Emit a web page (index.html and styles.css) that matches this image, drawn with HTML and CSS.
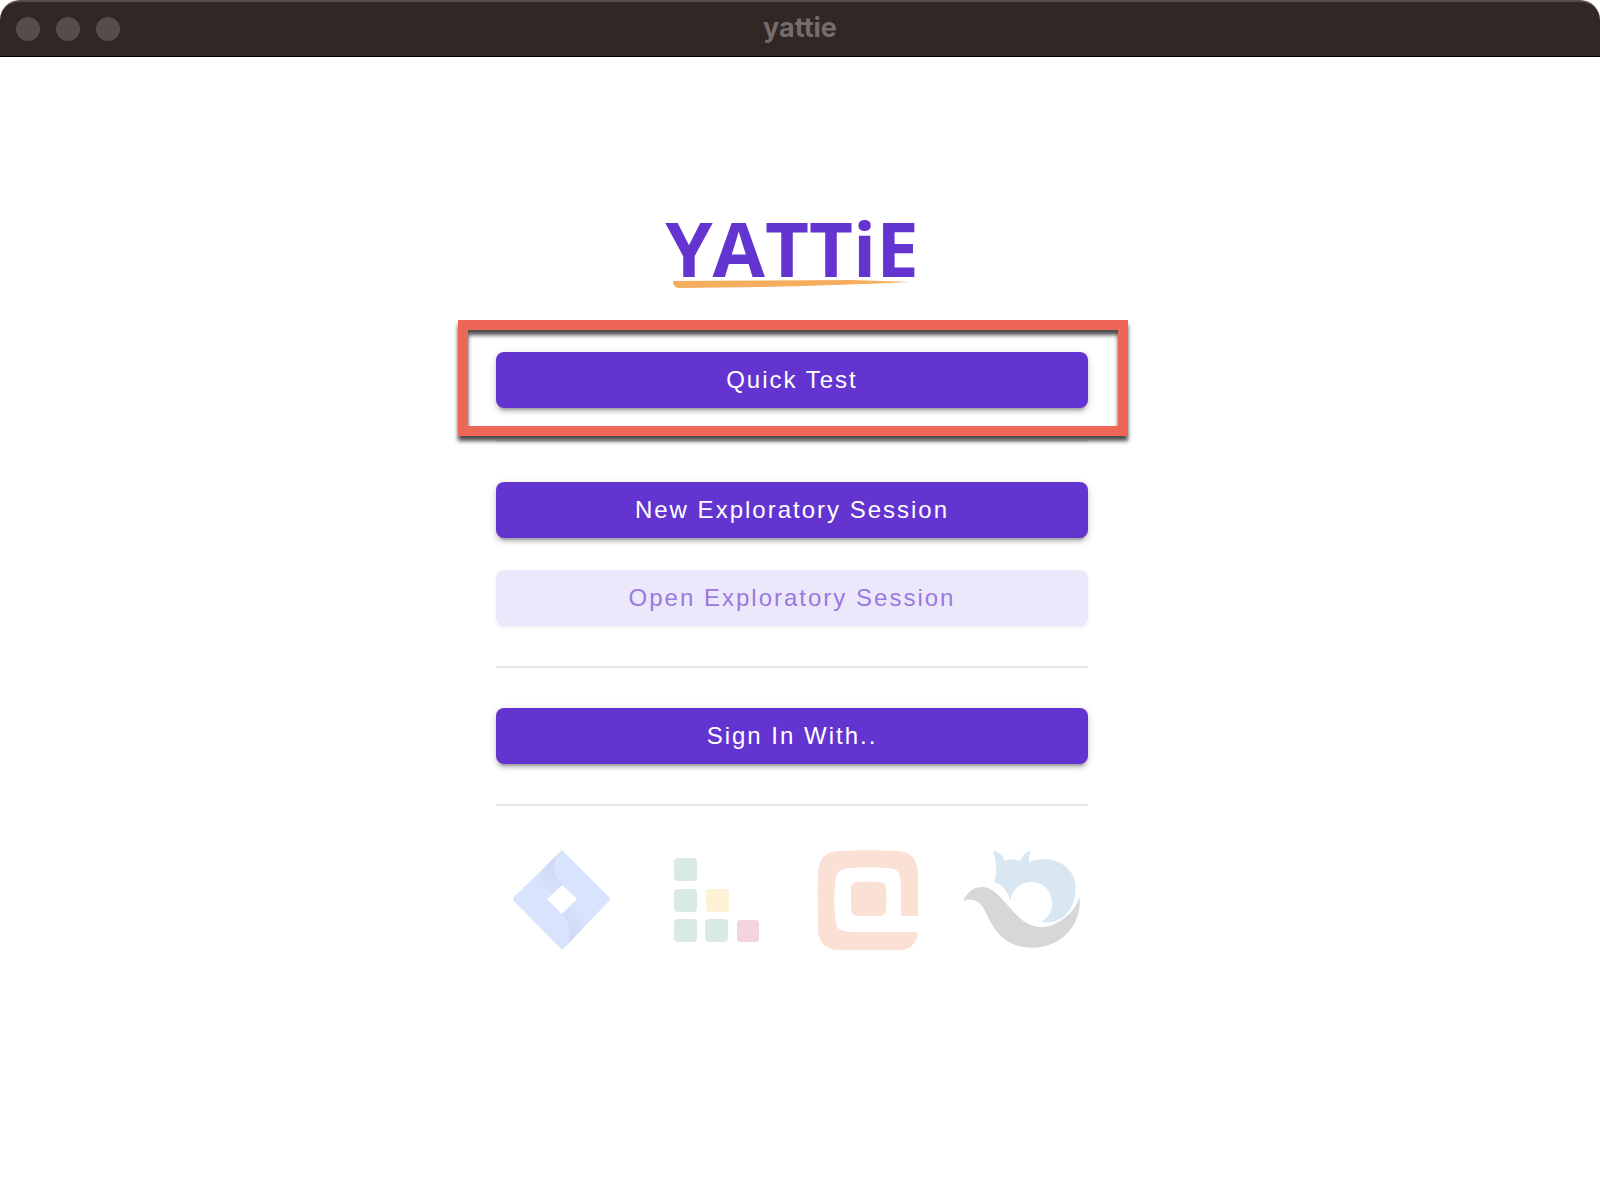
FILE: index.html
```html
<!DOCTYPE html>
<html lang="en">
<head>
<meta charset="utf-8">
<meta name="viewport" content="width=device-width, initial-scale=1">
<title>yattie</title>
<link rel="stylesheet" href="styles.css">
</head>
<body>
<header class="titlebar">
  <div class="lights"><span class="light"></span><span class="light"></span><span class="light"></span></div>
  <div class="title">yattie</div>
</header>
<main class="main">
  <div class="column">
    <svg class="logo" viewBox="0 0 240 72" role="img" aria-label="YATTiE">
      <text class="logo-text" x="120" y="59" text-anchor="middle">YATTiE</text>
      <path fill="#f4ae5e" d="M1 63 L180 62 L238 64 Q180 67 90 69 L10 70 Q1 71 1 63Z"/>
    </svg>
    <div class="quick">
      <button class="btn" type="button">Quick Test</button>
      <div class="highlight"></div>
    </div>
    <hr class="rule">
    <div class="group">
      <button class="btn" type="button">New Exploratory Session</button>
      <button class="btn" type="button" disabled>Open Exploratory Session</button>
    </div>
    <hr class="rule">
    <div class="group">
      <button class="btn" type="button">Sign In With..</button>
    </div>
    <hr class="rule">
    <div class="services">
      <svg viewBox="0 0 148 112" aria-hidden="true">
        <defs>
          <linearGradient id="fold-a" gradientUnits="userSpaceOnUse" x1="60" y1="24" x2="42" y2="42"><stop offset="0" stop-color="#d0d8f3"/><stop offset="1" stop-color="#d8e4fd"/></linearGradient>
          <linearGradient id="fold-b" gradientUnits="userSpaceOnUse" x1="72" y1="87" x2="90" y2="69"><stop offset="0" stop-color="#d0d8f3"/><stop offset="1" stop-color="#d8e4fd"/></linearGradient>
        </defs>
        <path fill="#d8e4fd" fill-rule="evenodd" d="M66 6 L113 53 Q115 55 113 57 L66 106 L18 57 Q16 55 18 53Z M66 41 L51 55 L66 70 L81 55Z"/>
        <path fill="url(#fold-a)" d="M62 10 Q53 26 66 41 L54 52 L29 43Z"/>
        <path fill="url(#fold-b)" d="M70 102 Q79 86 66 70 L78 58 L103 67Z"/>
      </svg>
      <svg viewBox="0 0 148 112" aria-hidden="true">
        <g fill="#d9e9e3">
          <rect x="30" y="14" width="23" height="23" rx="4"/>
          <rect x="30" y="45" width="23" height="23" rx="4"/>
          <rect x="30" y="75" width="23" height="23" rx="4"/>
          <rect x="61" y="75" width="23" height="23" rx="4"/>
        </g>
        <rect x="62" y="45" width="23" height="23" rx="4" fill="#fdf1d6"/>
        <rect x="93" y="76" width="22" height="22" rx="4" fill="#f5d4e2"/>
      </svg>
      <svg viewBox="0 0 148 112" aria-hidden="true">
        <path fill="#fbe0d5" d="M126 72 H109 V42 C109 28 106 24 92 24 C81 23 70 23 60 24 C47 25 44 28 43 41 C42 51 42 61 43 71 C44 85 46 87 59 88 H120 Q126 88 126 90 Q122 106 108 106 H48 Q26 106 26 84 C26 66 25 47 26 29 Q27 7 48 7 C67 6 86 6 104 7 Q125 7 126 29Z"/>
        <path fill="#fbe0d5" d="M66 38 Q76 37 87 38 Q94 38 94 45 Q95 55 94 65 Q94 72 87 72 H66 Q59 72 59 65 V45 Q59 38 66 38Z"/>
      </svg>
      <svg viewBox="0 0 148 112" aria-hidden="true">
        <g transform="translate(10 -9) scale(.3333)">
          <path fill="#d8e7f2" d="M129 47C150 52 160 62 163 78C178 72 198 72 212 79C216 62 226 50 244 47C238 58 236 68 236 82C290 58 350 80 370 125C392 180 360 250 310 260C298 263 285 263 274 260C300 245 310 220 305 195C300 160 275 141 243 141C210 142 185 165 181 197C172 165 155 148 133 142C142 115 140 85 129 47Z"/>
          <path fill="#d7d7d7" d="M39 198C55 165 80 153 105 157C140 163 165 205 195 235C240 285 290 285 330 258C365 235 380 215 388 185C398 250 350 338 245 338C180 338 145 305 118 255C100 215 85 180 39 198Z"/>
        </g>
      </svg>
    </div>
  </div>
</main>
</body>
</html>
```
FILE: styles.css
```css
* { box-sizing: border-box; }

body {
  margin: 0;
  background: #fff;
  font-family: "Liberation Sans", Arial, sans-serif;
}

.titlebar {
  display: grid;
  grid-template-columns: 1fr auto 1fr;
  align-items: center;
  height: 57px;
  padding: 0 16px;
  background: #312725;
  border-top: 2px solid #564b49;
  border-bottom: 1px solid #000;
  border-radius: 20px 20px 0 0;
}

.lights { display: flex; gap: 16px; }

.light {
  width: 24px;
  height: 24px;
  border-radius: 50%;
  background: #574c4a;
}

.title {
  padding-bottom: 2px;
  color: #766c6a;
  font: 700 27px/32px Inter, sans-serif;
}

.main {
  display: flex;
  justify-content: center;
  padding: 161px 16px 40px 0;
}

.column {
  display: flex;
  flex-direction: column;
  width: 100%;
  max-width: 592px;
}

.logo {
  width: 240px;
  height: 72px;
  align-self: center;
  margin-bottom: 62px;
  overflow: visible;
}

.logo-text {
  fill: #6334d0;
  font: 700 76px "Open Sans", sans-serif;
}

.quick {
  position: relative;
  display: flex;
  margin-bottom: 32px;
}

.highlight {
  position: absolute;
  inset: -32px -40px -28px -38px;
  border: 10px solid #ee6655;
  filter: drop-shadow(0 5px 2px rgba(0, 0, 0, .7));
  pointer-events: none;
}

.group {
  display: flex;
  flex-direction: column;
  gap: 32px;
  padding: 40px 0;
}

.btn {
  width: 100%;
  height: 56px;
  padding: 0 32px;
  border: 0;
  border-radius: 8px;
  background: #6334d0;
  color: #fff;
  font: 24px/32px "Liberation Sans", Arial, sans-serif;
  letter-spacing: 2px;
  box-shadow: 0 6px 2px -4px rgba(0, 0, 0, .2), 0 4px 4px rgba(0, 0, 0, .14), 0 2px 10px rgba(0, 0, 0, .12);
}

.btn:disabled {
  background: #ece8fc;
  color: #9a78e0;
  box-shadow: 0 2px 4px rgba(0, 0, 0, .06);
}

.rule {
  width: 100%;
  height: 2px;
  margin: 0;
  border: 0;
  background: #e5e5ea;
}

.services {
  display: grid;
  grid-template-columns: repeat(4, 1fr);
  padding-top: 38px;
}

.services svg { width: 100%; display: block; }
```
